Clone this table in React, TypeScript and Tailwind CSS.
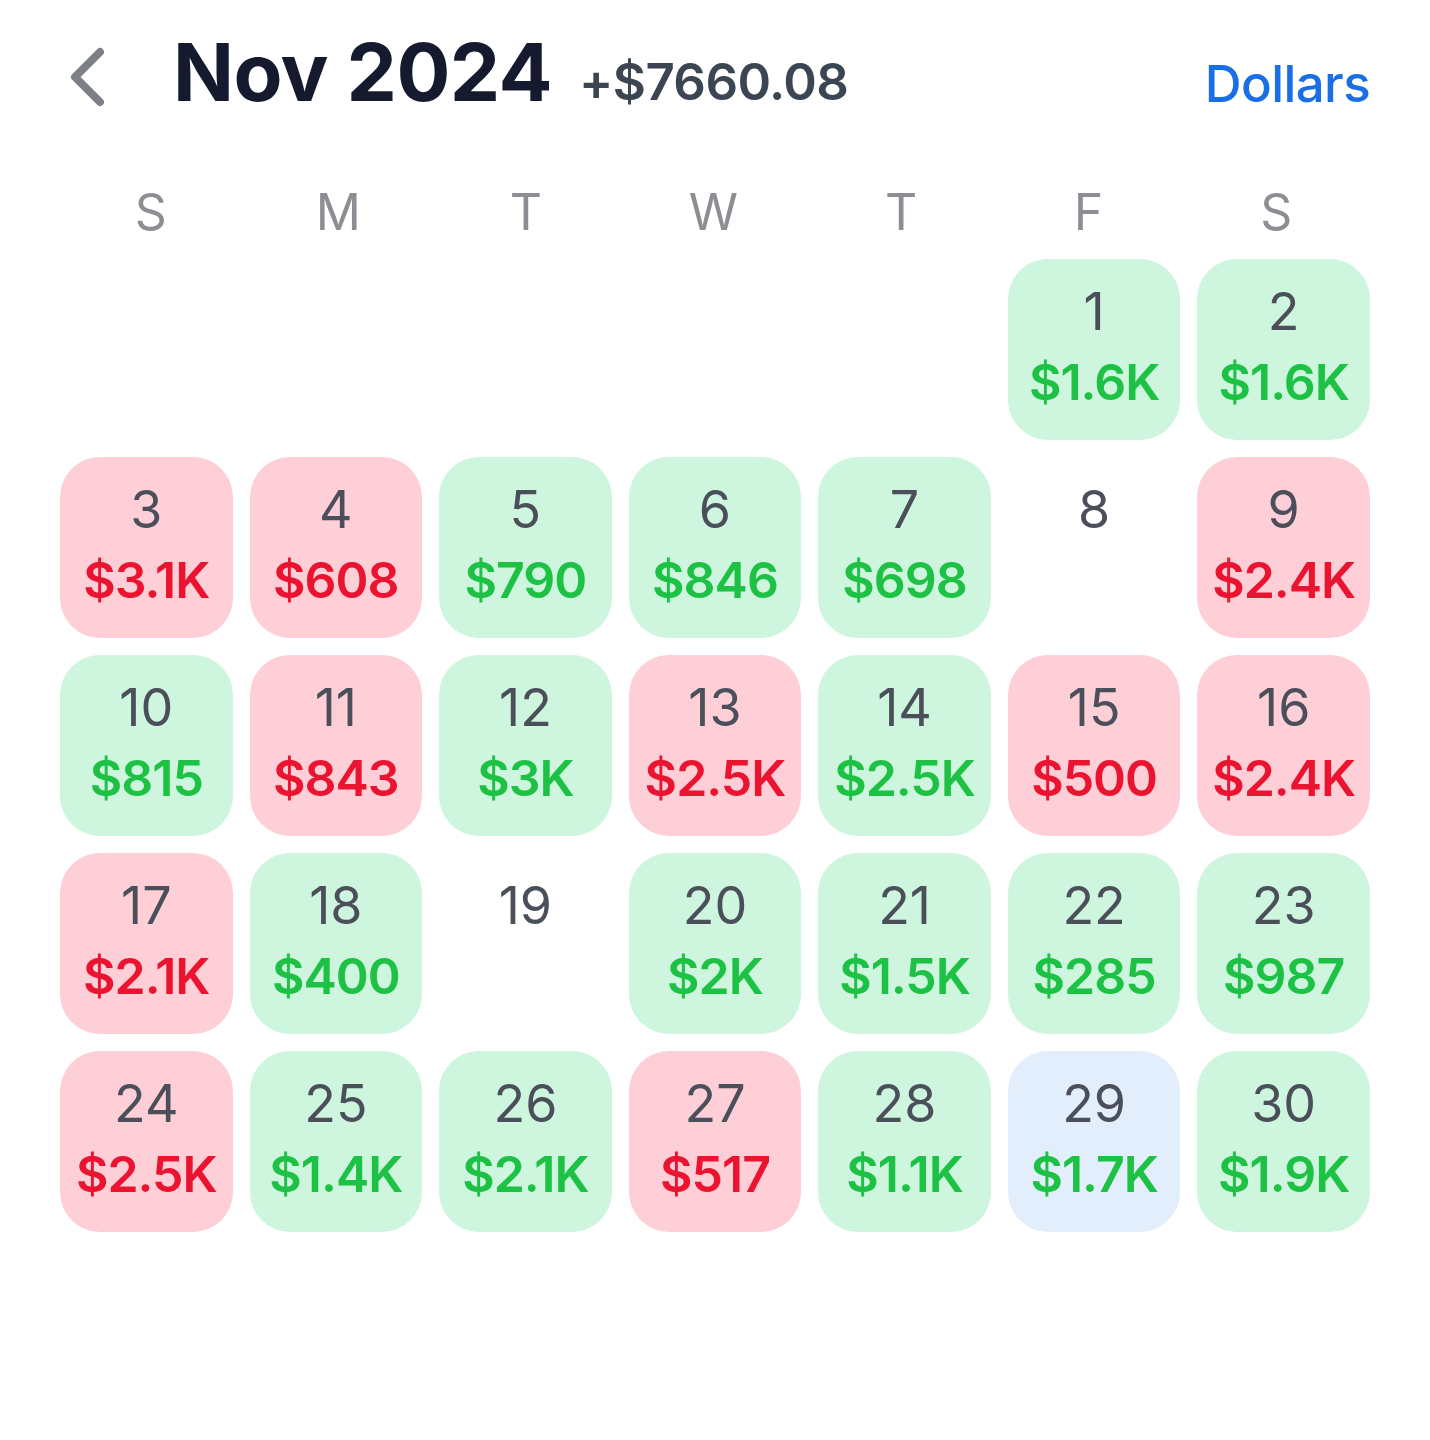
type Day = { d: number; amt?: string; tone?: "up" | "down" | "today" };

const days: Day[] = [
  { d: 1, amt: "$1.6K", tone: "up" },
  { d: 2, amt: "$1.6K", tone: "up" },
  { d: 3, amt: "$3.1K", tone: "down" },
  { d: 4, amt: "$608", tone: "down" },
  { d: 5, amt: "$790", tone: "up" },
  { d: 6, amt: "$846", tone: "up" },
  { d: 7, amt: "$698", tone: "up" },
  { d: 8 },
  { d: 9, amt: "$2.4K", tone: "down" },
  { d: 10, amt: "$815", tone: "up" },
  { d: 11, amt: "$843", tone: "down" },
  { d: 12, amt: "$3K", tone: "up" },
  { d: 13, amt: "$2.5K", tone: "down" },
  { d: 14, amt: "$2.5K", tone: "up" },
  { d: 15, amt: "$500", tone: "down" },
  { d: 16, amt: "$2.4K", tone: "down" },
  { d: 17, amt: "$2.1K", tone: "down" },
  { d: 18, amt: "$400", tone: "up" },
  { d: 19 },
  { d: 20, amt: "$2K", tone: "up" },
  { d: 21, amt: "$1.5K", tone: "up" },
  { d: 22, amt: "$285", tone: "up" },
  { d: 23, amt: "$987", tone: "up" },
  { d: 24, amt: "$2.5K", tone: "down" },
  { d: 25, amt: "$1.4K", tone: "up" },
  { d: 26, amt: "$2.1K", tone: "up" },
  { d: 27, amt: "$517", tone: "down" },
  { d: 28, amt: "$1.1K", tone: "up" },
  { d: 29, amt: "$1.7K", tone: "today" },
  { d: 30, amt: "$1.9K", tone: "up" },
];

const labels = ["S", "M", "T", "W", "T", "F", "S"];

const bg = {
  up: "bg-[#cef5de]",
  down: "bg-[#ffcfd7]",
  today: "bg-[#e3eefd]",
};

function Cell({ day }: { day: Day }) {
  const box = day.tone ? bg[day.tone] : "";
  const amtColor = day.tone === "down" ? "text-[#ea1431]" : "text-[#1dc244]";
  return (
    <div className={`h-[181px] rounded-[40px] flex flex-col items-center pt-[25px] ${box}`}>
      <div className="text-[52px] leading-[56px] text-[#4a4f5a]">{day.d}</div>
      {day.amt && (
        <div className={`mt-[14px] text-[50px] leading-[56px] font-semibold tracking-[-1px] ${amtColor}`}>
          {day.amt}
        </div>
      )}
    </div>
  );
}

export default function App() {
  return (
    <div className="w-[1430px] h-[1440px] bg-white font-['Inter',sans-serif] px-[60px] pt-[30px]">
      <div className="flex items-end h-[86px]">
        <svg width="44" height="64" viewBox="0 0 44 64" className="ml-[5px] mb-[8px] text-[#7c7f86]">
          <polyline
            points="35,8 10,33 35,58"
            fill="none"
            stroke="currentColor"
            strokeWidth="8"
            strokeLinecap="round"
            strokeLinejoin="round"
          />
        </svg>
        <h1 className="ml-[64px] text-[80px] leading-[88px] font-bold tracking-[-0.5px] text-[#151a2e]">Nov 2024</h1>
        <span className="ml-[27px] mb-[4px] text-[51px] leading-[60px] font-semibold tracking-[-0.6px] text-[#3c4652]">
          +$7660.08
        </span>
        <span className="ml-auto mb-[2px] text-[51px] leading-[60px] font-medium tracking-[-0.6px] text-[#1a6ee6]">
          Dollars
        </span>
      </div>
      <div className="grid grid-cols-7 -ml-[3px] mt-[69px] h-[54px] items-center">
        {labels.map((l, i) => (
          <div key={i} className="text-center text-[50px] leading-[54px] text-[#8d8d94]">
            {l}
          </div>
        ))}
      </div>
      <div className="grid grid-cols-7 gap-x-[17px] gap-y-[17px] mt-[20px]">
        {Array.from({ length: 5 }).map((_, i) => (
          <div key={"e" + i} />
        ))}
        {days.map((day) => (
          <Cell key={day.d} day={day} />
        ))}
      </div>
    </div>
  );
}
